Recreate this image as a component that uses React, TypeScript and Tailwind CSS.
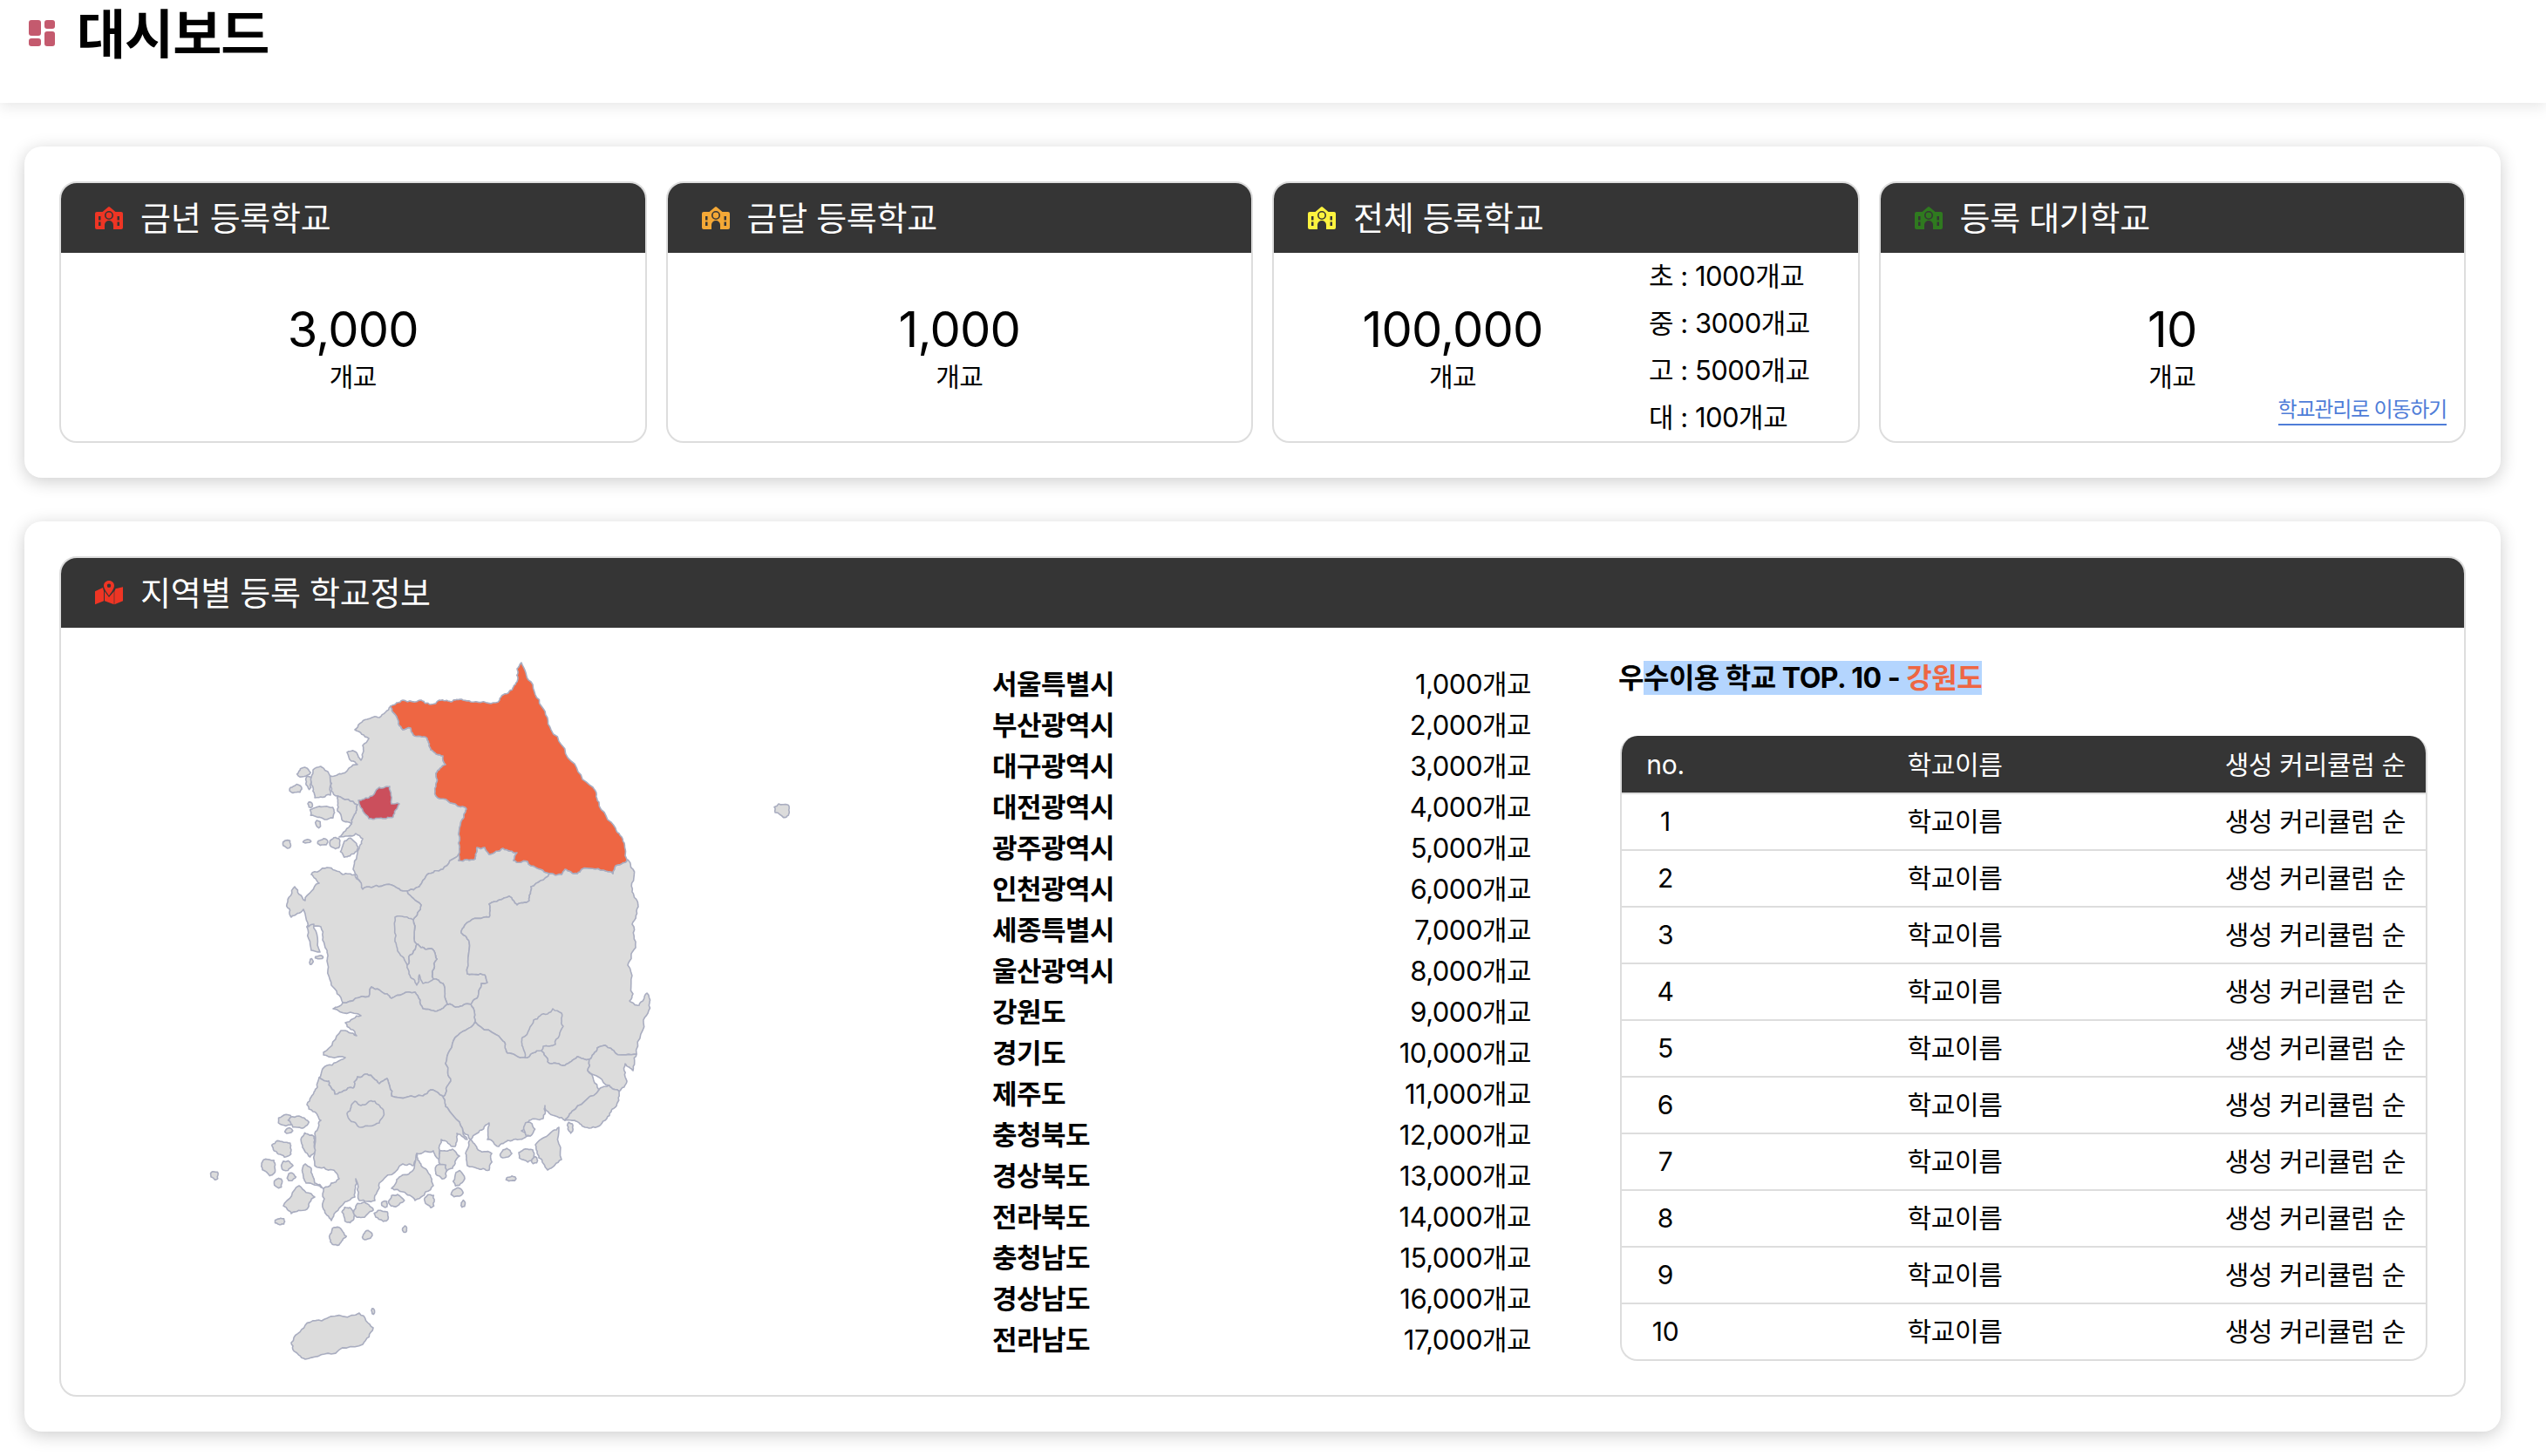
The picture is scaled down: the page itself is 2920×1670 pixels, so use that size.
import { FC } from "react";

type Pt = [number, number];

const font = { fontFamily: 'Inter, "Noto Sans CJK KR", sans-serif' };

// 두 점의 순서와 상관없이 같은 값이 나오도록 해서 인접 지역 경계가 어긋나지 않게 한다
const noise = (a: Pt, b: Pt) => {
  const [p, q] = a[0] < b[0] || (a[0] === b[0] && a[1] <= b[1]) ? [a, b] : [b, a];
  const v = Math.sin(p[0] * 12.9898 + p[1] * 78.233 + q[0] * 37.719 + q[1] * 4.581) * 43758.5453;
  return { r: v - Math.floor(v) - 0.5, p, q };
};

const split = (a: Pt, b: Pt, depth: number, amp: number): Pt[] => {
  const len = Math.hypot(a[0] - b[0], a[1] - b[1]);
  if (depth === 0 || len < 3) return [a];
  const { r, p, q } = noise(a, b);
  const nx = -(q[1] - p[1]) / (len || 1);
  const ny = (q[0] - p[0]) / (len || 1);
  const off = r * Math.min(len * 0.35, amp);
  const m: Pt = [(a[0] + b[0]) / 2 + nx * off, (a[1] + b[1]) / 2 + ny * off];
  return [...split(a, m, depth - 1, amp), ...split(m, b, depth - 1, amp)];
};

const toPath = (pts: Pt[], amp = 3.5) => {
  const out: Pt[] = [];
  pts.forEach((p, i) => out.push(...split(p, pts[(i + 1) % pts.length], 3, amp)));
  return "M" + out.map(([x, y]) => `${x.toFixed(1)} ${y.toFixed(1)}`).join("L") + "Z";
};

const blob = (cx: number, cy: number, rx: number, ry: number): Pt[] =>
  Array.from({ length: 9 }, (_, i) => {
    const t = (i / 9) * Math.PI * 2;
    const k = 0.7 + 0.5 * Math.abs(Math.sin(cx * 3.1 + cy + i * 2.3));
    return [cx + Math.cos(t) * rx * k, cy + Math.sin(t) * ry * k] as Pt;
  });

const rev = (c: Pt[]) => [...c].reverse();

const gwWest: Pt[] = [[449, 810], [456, 822], [463, 837], [472, 835], [475, 843], [491, 847], [495, 860], [509, 867], [512, 877], [501, 887], [501, 902], [501, 913], [523, 922], [536, 928], [531, 940], [527, 967], [527, 980]];
const gwSouthA: Pt[] = [[527, 980], [527, 987], [546, 985], [548, 972], [557, 972], [562, 980], [578, 973], [594, 978], [590, 987], [606, 988], [610, 993], [631, 1002]];
const gwSouthB: Pt[] = [[631, 1002], [645, 1003], [649, 997], [663, 1002], [668, 997], [693, 998], [704, 1002], [707, 993], [720, 986]];
const gwEast: Pt[] = [[717, 967], [707, 950], [688, 920], [681, 903], [656, 873], [633, 837], [622, 810], [610, 782], [599, 760], [594, 767], [594, 782], [585, 793], [574, 803], [564, 807], [541, 805], [532, 803], [518, 805], [505, 803], [495, 808], [484, 803], [463, 803]];
const ggCb: Pt[] = [[527, 980], [509, 997], [491, 1003], [482, 1017], [468, 1022]];
const ggCn: Pt[] = [[468, 1022], [450, 1015], [427, 1018], [417, 1020]];
const ggCoast: Pt[] = [[411, 1007], [406, 997], [413, 973], [417, 962], [409, 956], [390, 960], [404, 945], [406, 937], [411, 923], [388, 913], [381, 907], [380, 890], [394, 887], [411, 877], [404, 873], [399, 863], [408, 862], [415, 872], [417, 855], [424, 847], [408, 837], [422, 825], [436, 823]];
const cbCn: Pt[] = [[468, 1022], [484, 1038], [475, 1055], [479, 1083], [484, 1087], [495, 1088], [502, 1100], [498, 1123], [509, 1128], [514, 1152]];
const cbJb: Pt[] = [[514, 1152], [525, 1155], [541, 1152]];
const cbGb: Pt[] = [[631, 1002], [610, 1017], [608, 1033], [594, 1038], [585, 1028], [562, 1037], [562, 1052], [537, 1058], [530, 1070], [539, 1080], [537, 1117], [557, 1118], [560, 1127], [553, 1128], [548, 1145], [541, 1152]];
const gbCoast: Pt[] = [[727, 997], [726, 1023], [733, 1040], [726, 1060], [730, 1087], [721, 1107], [727, 1140], [723, 1148], [734, 1153], [743, 1139], [746, 1150], [739, 1173], [731, 1209]];
const gbUs: Pt[] = [[731, 1209], [707, 1208], [695, 1199], [686, 1202], [677, 1215]];
const gbGn: Pt[] = [[677, 1215], [663, 1212], [649, 1222], [629, 1218], [622, 1205], [603, 1213], [583, 1208], [576, 1192], [546, 1172]];
const cnCoast: Pt[] = [[408, 1003], [394, 1003], [376, 995], [358, 1003], [367, 1013], [351, 1033], [339, 1017], [330, 1037], [335, 1052], [349, 1043], [353, 1063], [369, 1063], [374, 1087], [376, 1102], [381, 1130]];
const cnJb: Pt[] = [[394, 1150], [424, 1143], [427, 1132], [445, 1140], [450, 1145], [477, 1138], [486, 1157], [500, 1160], [514, 1152]];
const jbGn: Pt[] = [[546, 1172], [523, 1190], [512, 1220], [518, 1240], [509, 1258]];
const jbJn: Pt[] = [[509, 1258], [495, 1250], [486, 1257], [450, 1257], [445, 1237], [436, 1243], [422, 1232], [411, 1235], [406, 1248], [385, 1255], [378, 1240], [367, 1236]];
const jbCoast: Pt[] = [[376, 1222], [397, 1213], [372, 1210], [372, 1207], [392, 1182], [410, 1188], [397, 1173], [415, 1165], [383, 1157]];
const gnCoast: Pt[] = [[649, 1285], [631, 1277], [626, 1268], [624, 1283], [608, 1285], [599, 1297], [610, 1302], [596, 1307], [583, 1308], [573, 1315], [560, 1307], [562, 1288], [548, 1300], [541, 1307], [532, 1298]];
const jnGn: Pt[] = [[532, 1298], [515, 1272], [509, 1258]];
const jnCoast: Pt[] = [[537, 1307], [525, 1300], [523, 1315], [507, 1307], [505, 1333], [498, 1320], [479, 1323], [475, 1337], [463, 1335], [436, 1357], [431, 1377], [413, 1377], [409, 1352], [408, 1373], [394, 1382], [381, 1400], [372, 1387], [372, 1363], [390, 1352], [383, 1342], [362, 1337], [362, 1300], [369, 1285], [360, 1275], [353, 1267], [358, 1258], [365, 1247]];

const gangwon = [...gwWest, ...gwSouthA.slice(1), ...gwSouthB.slice(1), ...gwEast];

const regions: Pt[][] = [
  [...ggCb, ...ggCn.slice(1), ...ggCoast, ...gwWest],
  [...ggCb, ...cbCn.slice(1), ...cbJb.slice(1), ...rev(cbGb).slice(1), ...rev(gwSouthA).slice(1)],
  [...ggCn, ...cnCoast, ...cnJb, ...rev(cbCn).slice(1)],
  [...gwSouthB, ...gbCoast, ...gbUs.slice(1), ...gbGn.slice(1), ...rev(cbGb)],
  [...cnJb, ...cbJb.slice(1), ...jbGn, ...jbJn.slice(1), ...jbCoast],
  [...rev(jbGn), ...gbGn.slice(0, -1).reverse(), [675, 1228], [688, 1250], [661, 1272], ...gnCoast, ...jnGn.slice(1, -1)],
  [...rev(jbJn), ...rev(jnGn).slice(1), ...jnCoast],
  [...rev(gbUs), [727, 1228], [718, 1220], [720, 1240], [711, 1252], [700, 1245], [675, 1228]],
  [[700, 1245], [711, 1252], [709, 1265], [702, 1275], [690, 1290], [672, 1293], [660, 1285], [649, 1285], [661, 1272], [688, 1250]],
  [[454, 1052], [475, 1055], [479, 1083], [470, 1097], [468, 1107], [458, 1092], [454, 1080]],
  [[470, 1097], [479, 1083], [484, 1087], [495, 1088], [502, 1100], [498, 1123], [486, 1128], [482, 1118], [479, 1130], [470, 1117], [468, 1107]],
  [[601, 1202], [603, 1213], [622, 1205], [624, 1200], [638, 1198], [647, 1177], [645, 1162], [635, 1157], [629, 1163], [613, 1170], [600, 1190]],
  [[399, 1277], [408, 1263], [415, 1268], [431, 1263], [441, 1275], [436, 1288], [415, 1293], [401, 1283]],
  [[388, 913], [411, 923], [406, 937], [404, 945], [393, 940], [388, 930]],
  // 제주
  [[335, 1540], [351, 1520], [376, 1512], [413, 1506], [429, 1523], [417, 1542], [381, 1553], [351, 1559], [337, 1548]],
  // 강화, 안면, 진도, 고흥, 거제, 남해
  [[360, 883], [369, 879], [378, 887], [380, 912], [362, 915], [358, 900]],
  [[353, 1063], [361, 1060], [368, 1092], [358, 1090]],
  [[326, 1383], [344, 1360], [362, 1373], [353, 1387], [335, 1392]],
  [[479, 1323], [484, 1337], [495, 1350], [498, 1360], [489, 1367], [477, 1377], [463, 1367], [450, 1363], [459, 1350], [475, 1342]],
  [[615, 1313], [635, 1297], [642, 1293], [645, 1330], [629, 1342], [619, 1328]],
  [[535, 1323], [541, 1307], [548, 1317], [565, 1323], [562, 1342], [548, 1340], [537, 1337]],
  [[351, 1335], [358, 1340], [362, 1357], [372, 1363], [352, 1357], [348, 1345]],
  [[505, 1320], [520, 1318], [528, 1326], [520, 1340], [512, 1345], [506, 1338]],
];

const islands: Pt[][] = [
  [349, 886, 7, 5], [340, 905, 6, 5], [355, 897, 3, 8], [357, 923, 3, 3], [371, 932, 13, 8], [366, 945, 3, 4],
  [330, 968, 4, 5], [353, 965, 4, 2], [371, 966, 5, 4], [385, 967, 5, 7], [401, 973, 9, 10], [367, 1098, 4, 2], [358, 1103, 2, 3],
  [898, 929, 8, 8], [429, 1504, 2, 3],
  [328, 1285, 7, 7], [344, 1287, 13, 6], [332, 1297, 4, 3], [325, 1317, 11, 9], [355, 1312, 8, 13], [309, 1338, 7, 10],
  [330, 1337, 7, 5], [335, 1350, 5, 4], [320, 1357, 4, 6], [322, 1401, 5, 4], [388, 1418, 10, 9], [422, 1417, 5, 5],
  [465, 1410, 2, 4], [401, 1393, 8, 8], [417, 1388, 11, 8], [439, 1394, 8, 6], [442, 1381, 3, 4], [455, 1377, 9, 6],
  [494, 1377, 5, 8], [525, 1368, 6, 5], [532, 1381, 2, 4], [527, 1352, 6, 8], [507, 1343, 6, 9], [581, 1323, 6, 5],
  [587, 1352, 5, 3], [605, 1325, 8, 8], [614, 1331, 3, 4], [655, 1293, 3, 6], [608, 1295, 7, 7], [247, 1348, 4, 5],
].map(([x, y, a, b]) => blob(x, y, a, b));

const seoul: Pt[] = [[412, 918], [424, 915], [436, 903], [448, 902], [450, 922], [459, 922], [452, 937], [440, 939], [424, 939], [417, 930]];

const KoreaMap: FC = () => (
  <svg viewBox="220 740 720 840" className="ml-[149px] mt-[20px] h-[840px] w-[720px] shrink-0">
    <g fill="#dcdcdc" stroke="#a9adc0" strokeWidth="1.6" strokeLinejoin="round">
      {regions.map((r, i) => (
        <path key={i} d={toPath(r)} />
      ))}
      {islands.map((r, i) => (
        <path key={i} d={toPath(r, 2)} />
      ))}
      <path d={toPath(gangwon)} fill="#ee6643" />
      <path d={toPath(seoul, 2)} fill="#cb4f5c" />
    </g>
  </svg>
);

const SchoolIcon: FC<{ className: string }> = ({ className }) => (
  <svg viewBox="0 0 32 26" fill="currentColor" className={className}>
    <path
      fillRule="evenodd"
      d="M0 8a2 2 0 0 1 2-2h6.500L15 .500a1.500 1.500 0 0 1 2 0L23.500 6H30a2 2 0 0 1 2 2v16a2 2 0 0 1-2 2h-9v-5a5 5 0 0 0-10 0v5H2a2 2 0 0 1-2-2zM16 5a5 5 0 1 0 0 10 5 5 0 0 0 0-10zm0 1.600a3.400 3.400 0 1 1 0 6.800 3.400 3.400 0 0 1 0-6.800zM4 11v4.500h2.500V11zm0 6.500V22h2.500v-4.500zM25.500 11v4.500H28V11zm0 6.500V22H28v-4.500z"
    />
    <path d="M15.400 8h1.200v2.400h1.900v1.200h-3.100z" />
  </svg>
);

const MapIcon: FC<{ className: string }> = ({ className }) => (
  <svg viewBox="0 0 32 28" fill="currentColor" className={className}>
    <path d="M0 12.300 9 8c.3 1.500.8 3 1 4v11.300L0 27.300zM11 12.300 16 19l5.700-6.700v15L11 23.300zM22.300 12.300c.6-1.200 1-2.300 1.200-3L32 7.300v16l-9.700 4z" />
    <path
      fillRule="evenodd"
      d="M16 0c-3.500 0-6 2.600-6 5.800 0 3.700 4.300 8.800 6 11.500 1.700-2.700 6-7.800 6-11.500C22 2.600 19.500 0 16 0zm0 3.600a2.200 2.200 0 1 1 0 4.400 2.200 2.200 0 0 1 0-4.400z"
    />
  </svg>
);

const Card: FC<{ title: string; icon: React.ReactNode; children: React.ReactNode; className?: string }> = ({ title, icon, children, className }) => (
  <div className={`flex flex-col overflow-hidden rounded-[20px] border-2 border-[#dddddd] bg-white ${className ?? ""}`}>
    <div className="flex h-[80px] shrink-0 items-center gap-[20px] bg-[#353535] pl-[39px] text-[38px] tracking-[-0.3px] text-white">
      {icon}
      <span>{title}</span>
    </div>
    {children}
  </div>
);

const Count: FC<{ value: string }> = ({ value }) => (
  <div className="flex flex-col items-center">
    <div className="text-[56px] leading-[68px] tracking-[-0.8px] text-black">{value}</div>
    <div className="text-[30px] leading-[40px] tracking-[-0.5px] text-black">개교</div>
  </div>
);

const regionRows = [
  ["서울특별시", "1,000개교"],
  ["부산광역시", "2,000개교"],
  ["대구광역시", "3,000개교"],
  ["대전광역시", "4,000개교"],
  ["광주광역시", "5,000개교"],
  ["인천광역시", "6,000개교"],
  ["세종특별시", "7,000개교"],
  ["울산광역시", "8,000개교"],
  ["강원도", "9,000개교"],
  ["경기도", "10,000개교"],
  ["제주도", "11,000개교"],
  ["충청북도", "12,000개교"],
  ["경상북도", "13,000개교"],
  ["전라북도", "14,000개교"],
  ["충청남도", "15,000개교"],
  ["경상남도", "16,000개교"],
  ["전라남도", "17,000개교"],
];

const App: FC = () => (
  <div className="min-h-[1670px] bg-white text-black" style={font}>
    <header className="flex h-[118px] items-start bg-white pl-[33px] shadow-[0_4px_16px_rgba(0,0,0,0.1)]">
      <svg viewBox="0 0 30 30" className="mt-[23px] h-[30px] w-[30px] text-[#c45a6e]" fill="currentColor">
        <rect x="0" y="0" width="14" height="18" rx="3" />
        <rect x="18" y="0" width="12" height="10" rx="3" />
        <rect x="0" y="21" width="14" height="9" rx="3" />
        <rect x="18" y="13" width="12" height="17" rx="3" />
      </svg>
      <h1 className="ml-[25px] mt-0 text-[61px] font-bold leading-[80px] tracking-[-1px]">대시보드</h1>
    </header>

    <main className="flex flex-col gap-[50px] pl-[28px] pr-[52px] pt-[50px]">
      <section className="grid h-[380px] grid-cols-4 gap-[22px] rounded-[20px] bg-white p-[40px] shadow-[0_4px_20px_rgba(0,0,0,0.2)]">
        <Card title="금년 등록학교" icon={<SchoolIcon className="h-[26px] w-[32px] text-[#ee3524]" />}>
          <div className="flex flex-1 items-center justify-center">
            <Count value="3,000" />
          </div>
        </Card>
        <Card title="금달 등록학교" icon={<SchoolIcon className="h-[26px] w-[32px] text-[#f4a836]" />}>
          <div className="flex flex-1 items-center justify-center">
            <Count value="1,000" />
          </div>
        </Card>
        <Card title="전체 등록학교" icon={<SchoolIcon className="h-[26px] w-[32px] text-[#fdf33f]" />}>
          <div className="flex flex-1 items-center">
            <div className="w-[430px] pr-[20px]">
              <Count value="100,000" />
            </div>
            <div className="flex flex-col text-[31px] leading-[54px] tracking-[-0.5px]">
              <span>초 : 1000개교</span>
              <span>중 : 3000개교</span>
              <span>고 : 5000개교</span>
              <span>대 : 100개교</span>
            </div>
          </div>
        </Card>
        <Card title="등록 대기학교" icon={<SchoolIcon className="h-[26px] w-[32px] text-[#2f7a1f]" />} className="relative">
          <div className="flex flex-1 items-center justify-center">
            <Count value="10" />
          </div>
          <a className="absolute bottom-[18px] right-[20px] border-b-2 border-[#4f7dd8] text-[24px] leading-[32px] tracking-[-1.2px] text-[#4f7dd8]">
            학교관리로 이동하기
          </a>
        </Card>
      </section>

      <section className="h-[1044px] rounded-[20px] bg-white p-[40px] shadow-[0_4px_20px_rgba(0,0,0,0.2)]">
        <Card title="지역별 등록 학교정보" icon={<MapIcon className="h-[28px] w-[32px] text-[#ee3524]" />} className="h-full">
          <div className="flex flex-1">
            <KoreaMap />
            <ul className="ml-[199px] mt-[41px] w-[618px] shrink-0">
              {regionRows.map(([name, count]) => (
                <li key={name} className="flex h-[47px] items-center justify-between text-[31px] leading-[47px] tracking-[-0.5px]">
                  <span className="font-bold">{name}</span>
                  <span>{count}</span>
                </li>
              ))}
            </ul>
            <div className="ml-[100px] flex w-[928px] shrink-0 flex-col">
              <h2 className="mt-[35px] h-[45px] text-[32px] font-bold leading-[45px] tracking-[-0.5px]">
                우
                <span className="bg-[#b4d5fe]">
                  수이용 학교 TOP. 10 - <span className="text-[#ee6643]">강원도</span>
                </span>
              </h2>
              <div className="ml-[2px] mt-[44px] overflow-hidden rounded-[20px] border-2 border-t-0 border-[#dddddd] text-[30px] tracking-[-0.3px]">
                <div className="flex h-[65px] items-center bg-[#353535] pr-[23px] pt-[2px] text-white">
                  <span className="w-[100px] text-center">no.</span>
                  <span className="w-[564px] text-center">학교이름</span>
                  <span className="flex-1 text-right">생성 커리큘럼 순</span>
                </div>
                {Array.from({ length: 10 }, (_, i) => (
                  <div key={i} className="flex h-[65px] items-center border-t-2 border-[#dddddd] pr-[23px] first:border-t-0">
                    <span className="w-[100px] text-center">{i + 1}</span>
                    <span className="w-[564px] text-center">학교이름</span>
                    <span className="flex-1 text-right">생성 커리큘럼 순</span>
                  </div>
                ))}
              </div>
            </div>
          </div>
        </Card>
      </section>
    </main>
  </div>
);

export default App;
